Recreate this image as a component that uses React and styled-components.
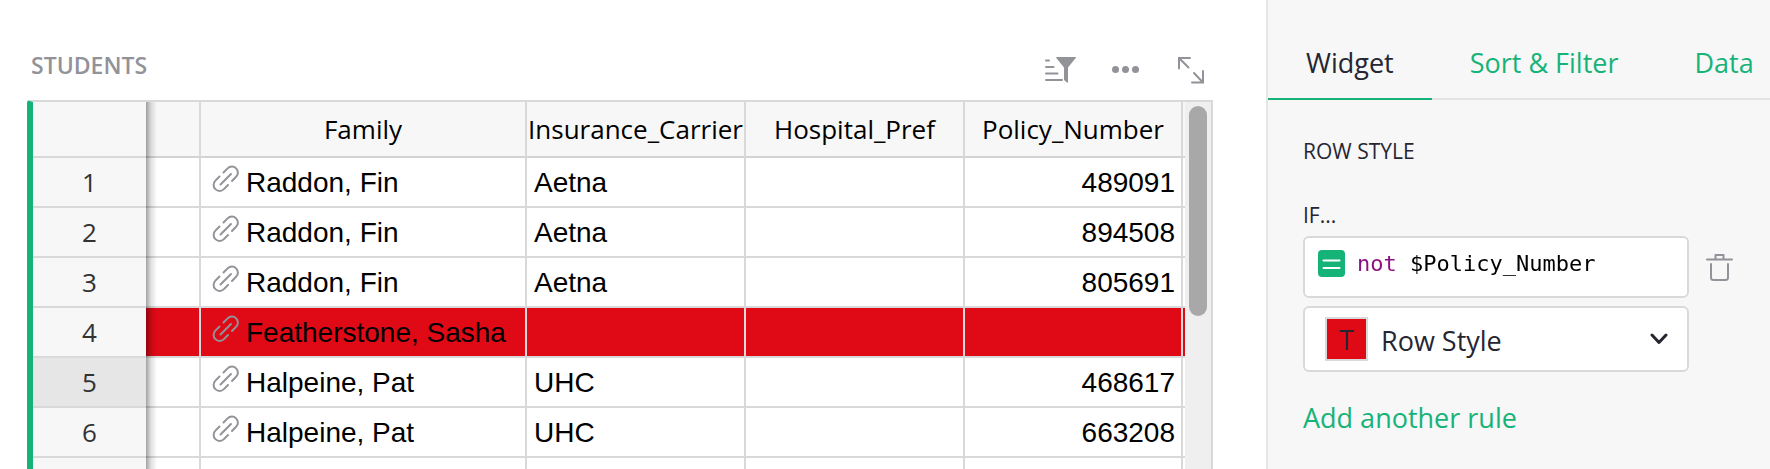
import React, { useState } from "react";
import styled, { createGlobalStyle } from "styled-components";

const columns = [
  { key: "family", label: "Family" },
  { key: "carrier", label: "Insurance_Carrier" },
  { key: "hospital", label: "Hospital_Pref" },
  { key: "policy", label: "Policy_Number" }
];

const students = [
  { id: 1, family: "Raddon, Fin", carrier: "Aetna", policy: "489091" },
  { id: 2, family: "Raddon, Fin", carrier: "Aetna", policy: "894508" },
  { id: 3, family: "Raddon, Fin", carrier: "Aetna", policy: "805691" },
  { id: 4, family: "Featherstone, Sasha" },
  { id: 5, family: "Halpeine, Pat", carrier: "UHC", policy: "468617" },
  { id: 6, family: "Halpeine, Pat", carrier: "UHC", policy: "663208" },
  {}
];

const tabs = ["Widget", "Sort & Filter", "Data"];

function LinkIcon() {
  return (
    <svg width="28" height="28" viewBox="0 0 28 28" fill="none" stroke="#929299" strokeWidth="2" strokeLinecap="round" strokeLinejoin="round">
      <path d="M8.5 19.5L19 9" />
      <path d="M11.5 7.5L15.6 3.4C18 1 21.8 1 24.1 3.4C26.5 5.8 26.5 9.5 24.1 11.8L20 16" />
      <path d="M16 20L11.9 24.1C9.5 26.5 5.8 26.5 3.4 24.1C1 21.8 1 18 3.4 15.6L7.5 11.5" />
    </svg>
  );
}

function SortFilterIcon() {
  return (
    <svg width="31" height="28" viewBox="0 0 31 28" fill="none">
      <path d="M1 4.5H4M1 11H8.500M1 17.500H12.500M1 24H17" stroke="#929299" strokeWidth="2" strokeLinecap="round" />
      <path d="M12 1H30.500C31 1 31 1.700 30.700 2L23 11.500V26C23 27 22.500 27 22 26.500L19 24V11.500L11.300 2C11 1.500 11.200 1 12 1Z" fill="#929299" />
    </svg>
  );
}

function DotsIcon() {
  return (
    <svg width="30" height="28" viewBox="0 0 30 28" fill="#929299">
      <circle cx="3.5" cy="13.500" r="3.500" />
      <circle cx="13.5" cy="13.500" r="3.500" />
      <circle cx="23.5" cy="13.500" r="3.500" />
    </svg>
  );
}

function ExpandIcon() {
  return (
    <svg width="26" height="28" viewBox="0 0 26 28" fill="none" stroke="#929299" strokeWidth="2" strokeLinecap="round">
      <path d="M1 12.500V2H12M1.500 2.500L10.500 11.500" />
      <path d="M25 15V26.500H14M24.500 26L16 17" />
    </svg>
  );
}

function TrashIcon() {
  return (
    <svg width="27" height="28" viewBox="0 0 27 28" fill="none" stroke="#929299" strokeWidth="2" strokeLinecap="round" strokeLinejoin="round">
      <path d="M1 6.500H26" />
      <path d="M9.500 6V2H17.500V6" />
      <path d="M5 11V24.500C5 26 6 27 7.500 27H19.500C21 27 22 26 22 24.500V11" />
    </svg>
  );
}

export default function App() {
  const [activeTab, setActiveTab] = useState("Widget");
  const [formula, setFormula] = useState("not $Policy_Number");

  return (
    <Page>
      <GlobalStyle />
      <Main>
        <SectionHeader>
          <Title>STUDENTS</Title>
          <Toolbar>
            <IconButton aria-label="Sort and filter"><SortFilterIcon /></IconButton>
            <IconButton aria-label="Menu"><DotsIcon /></IconButton>
            <IconButton aria-label="Expand"><ExpandIcon /></IconButton>
          </Toolbar>
        </SectionHeader>
        <GridView>
          <TableArea>
            <Table>
              <colgroup>
                <Col $width={113} />
                <Col $width={55} />
                <Col $width={326} />
                <Col $width={219} />
                <Col $width={219} />
                <Col $width={218} />
                <col />
              </colgroup>
              <thead>
                <tr>
                  <RowNumber as="td" />
                  <HeaderCell as="td" />
                  {columns.map((column) => (
                    <HeaderCell key={column.key} scope="col">{column.label}</HeaderCell>
                  ))}
                  <HeaderCell as="td" $last />
                </tr>
              </thead>
              <tbody>
                {students.map((student, index) => (
                  <Row key={index} $flagged={student.family && !student.policy}>
                    <RowNumber scope="row" $selected={student.id === 5}>{student.id}</RowNumber>
                    <Cell />
                    <Cell>
                      <Reference>
                        <LinkIcon />
                        {student.family}
                      </Reference>
                    </Cell>
                    <Cell>{student.carrier}</Cell>
                    <Cell>{student.hospital}</Cell>
                    <Cell $align="right">{student.policy}</Cell>
                    <Cell $last />
                  </Row>
                ))}
              </tbody>
            </Table>
          </TableArea>
          <ScrollTrack>
            <ScrollThumb />
          </ScrollTrack>
        </GridView>
      </Main>

      <Panel>
        <TabBar role="tablist">
          {tabs.map((tab) => (
            <Tab key={tab} role="tab" aria-selected={tab === activeTab} $active={tab === activeTab} onClick={() => setActiveTab(tab)}>
              {tab}
            </Tab>
          ))}
          <TabFill />
        </TabBar>
        <PanelBody>
          <PanelHeading>ROW STYLE</PanelHeading>
          <RuleLabel htmlFor="rule-formula">IF...</RuleLabel>
          <RuleGrid>
            <FormulaBox>
              <FormulaIcon>
                <svg width="27" height="27" viewBox="0 0 27 27" stroke="#fff" strokeWidth="2" strokeLinecap="round">
                  <path d="M5.500 10.500H21.500M5.500 18H21.500" />
                </svg>
              </FormulaIcon>
              <FormulaInput id="rule-formula" spellCheck="false" value={formula} onChange={(e) => setFormula(e.target.value)} />
            </FormulaBox>
            <IconButton aria-label="Delete rule"><TrashIcon /></IconButton>
            <StyleButton>
              <Swatch>T</Swatch>
              <StyleName>Row Style</StyleName>
              <svg width="18" height="12" viewBox="0 0 18 12" fill="none" stroke="#262633" strokeWidth="3" strokeLinecap="round" strokeLinejoin="round">
                <path d="M2 2L9 9.500L16 2" />
              </svg>
            </StyleButton>
          </RuleGrid>
          <AddRule>Add another rule</AddRule>
        </PanelBody>
      </Panel>
    </Page>
  );
}

const GlobalStyle = createGlobalStyle`
  * {
    box-sizing: border-box;
  }

  body {
    margin: 0;
    background: #fff;
    color: #262633;
    font-family: "Open Sans", "Noto Sans", sans-serif;
    font-size: 26px;
  }

  button, input {
    margin: 0;
    padding: 0;
    border: 0;
    background: none;
    color: inherit;
    font: inherit;
  }

  button {
    cursor: pointer;
  }

  svg {
    display: block;
    flex: none;
  }
`;

const Page = styled.div`
  display: flex;
  height: 100vh;
  overflow: hidden;
`;

const Main = styled.main`
  display: flex;
  flex: 1;
  flex-direction: column;
  min-width: 0;
  padding: 0 53px 0 27px;
`;

const SectionHeader = styled.header`
  display: flex;
  flex: none;
  align-items: center;
  justify-content: space-between;
  height: 100px;
  padding: 30px 9px 0 4px;
`;

const Title = styled.h2`
  margin: 0;
  color: #929299;
  font-size: 23px;
  font-weight: 600;
  line-height: 30px;
`;

const Toolbar = styled.div`
  display: flex;
  align-items: center;
  align-self: flex-end;
  gap: 36px;
  height: 60px;
`;

const IconButton = styled.button`
  display: flex;
  align-items: center;
  justify-content: center;
`;

const GridView = styled.div`
  display: flex;
  flex: 1;
  min-height: 0;
  border-top: 2px solid #d9d9d9;
  border-right: 2px solid #d9d9d9;
  border-left: 6px solid #16b378;
  border-top-left-radius: 3px;
`;

const TableArea = styled.div`
  flex: 1;
  min-width: 0;
  overflow: hidden;
`;

const Table = styled.table`
  width: 100%;
  table-layout: fixed;
  border-collapse: separate;
  border-spacing: 0;
`;

const Col = styled.col`
  width: ${(props) => props.$width}px;
`;

const HeaderCell = styled.th`
  height: 56px;
  padding: 0;
  border-right: ${(props) => (props.$last ? "0" : "2px solid #d9d9d9")};
  border-bottom: 2px solid #d3d3d3;
  background: #f7f7f7;
  color: #000;
  font-weight: 400;
  line-height: 46px;
  text-align: center;
  white-space: nowrap;
`;

const RowNumber = styled.th`
  position: sticky;
  left: 0;
  padding: 0;
  border-bottom: 2px solid #d9d9d9;
  background: ${(props) => (props.$selected ? "#e6e6e6" : "#f7f7f7")};
  color: #333;
  font-weight: 400;
  line-height: 46px;
  text-align: center;

  &::after {
    content: "";
    position: absolute;
    top: 0;
    bottom: -2px;
    left: 100%;
    width: 11px;
    background: linear-gradient(90deg, rgba(0, 0, 0, 0.36), rgba(0, 0, 0, 0.12) 45%, transparent);
  }
`;

const Row = styled.tr`
  background: ${(props) => (props.$flagged ? "#e00a17" : "#fff")};
`;

const Cell = styled.td`
  height: 50px;
  padding: ${(props) => (props.$last ? "0" : "1px 6px 0 7px")};
  border-right: ${(props) => (props.$last ? "0" : "2px solid #d9d9d9")};
  border-bottom: 2px solid #d9d9d9;
  color: #000;
  font-family: "Liberation Sans", Arial, sans-serif;
  font-size: 28px;
  line-height: 46px;
  text-align: ${(props) => props.$align || "left"};
  white-space: nowrap;
`;

const Reference = styled.div`
  display: flex;
  gap: 6px;
  padding: 0 4px;

  svg {
    margin-top: 5px;
  }
`;

const ScrollTrack = styled.div`
  width: 26px;
  padding: 4px;
  background: #efefef;
`;

const ScrollThumb = styled.div`
  height: 210px;
  border-radius: 9px;
  background: #a8a8a8;
`;

const Panel = styled.aside`
  flex: 0 0 504px;
  overflow: hidden;
  border-left: 2px solid #e6e6e6;
  background: #f7f7f7;
  font-size: 27px;
`;

const TabBar = styled.div`
  display: flex;
`;

const Tab = styled.button`
  flex: none;
  height: 100px;
  padding: 28px 38px 0;
  border-bottom: 2px solid ${(props) => (props.$active ? "#16b378" : "#e3e3e3")};
  color: ${(props) => (props.$active ? "#262633" : "#16b378")};
  line-height: 70px;
  white-space: nowrap;
`;

const TabFill = styled.div`
  flex: 1;
  border-bottom: 2px solid #e3e3e3;
`;

const PanelBody = styled.div`
  padding: 36px 37px 0 35px;
`;

const PanelHeading = styled.h3`
  margin: 0 0 34px;
  font-size: 21px;
  font-weight: 400;
  line-height: 30px;
`;

const RuleLabel = styled.label`
  display: block;
  margin-bottom: 6px;
  font-size: 21px;
  line-height: 30px;
`;

const RuleGrid = styled.div`
  display: grid;
  grid-template-columns: 1fr 27px;
  gap: 8px 17px;
`;

const FormulaBox = styled.div`
  display: flex;
  align-items: center;
  gap: 12px;
  min-width: 0;
  padding: 8px 13px 16px;
  border: 2px solid #d9d9d9;
  border-radius: 6px;
  background: #fff;
`;

const FormulaIcon = styled.span`
  border-radius: 4px;
  background: #16b378;
`;

/* the keyword takes the first four characters */
const FormulaInput = styled.input`
  flex: 1;
  min-width: 0;
  height: 34px;
  outline: none;
  background: linear-gradient(90deg, #8b1180 4ch, #000 4ch);
  background-clip: text;
  -webkit-background-clip: text;
  color: transparent;
  caret-color: #000;
  font-family: "DejaVu Sans Mono", monospace;
  font-size: 22px;
`;

const StyleButton = styled.button`
  display: flex;
  align-items: center;
  gap: 13px;
  height: 66px;
  padding: 0 19px 0 20px;
  border: 2px solid #d9d9d9;
  border-radius: 6px;
  background: #fff;
  text-align: left;
`;

const Swatch = styled.span`
  width: 43px;
  height: 44px;
  border: 2px solid #d9d9d9;
  background: #e00a17;
  line-height: 42px;
  text-align: center;
`;

const StyleName = styled.span`
  flex: 1;
  padding-top: 2px;
`;

const AddRule = styled.button`
  margin-top: 26px;
  color: #16b378;
  line-height: 40px;
`;
